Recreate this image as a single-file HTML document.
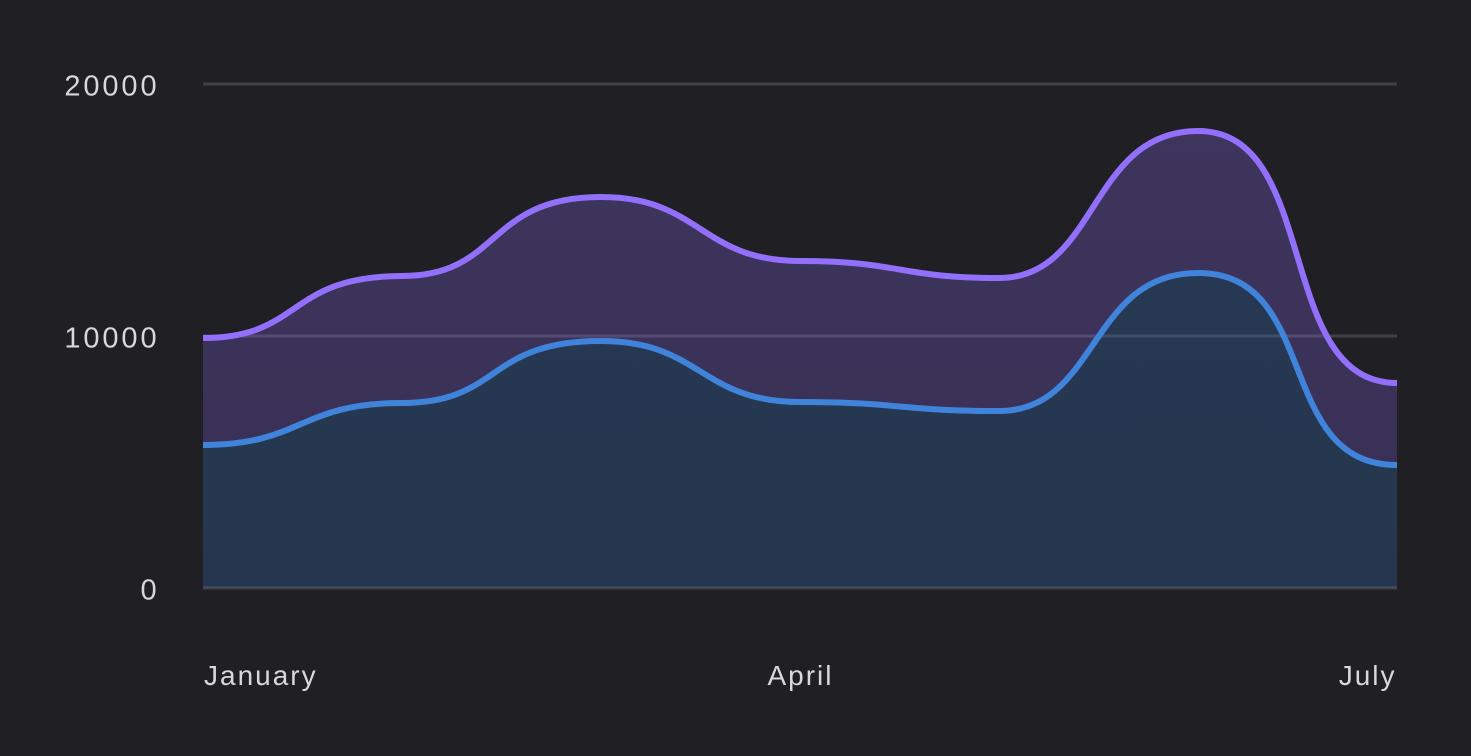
<!DOCTYPE html>
<html>
<head>
<meta charset="utf-8">
<style>
html,body{margin:0;padding:0;background:#1f1f24;width:1471px;height:756px;overflow:hidden}
svg{display:block}
text{font-family:"Liberation Sans",sans-serif;font-size:28px;fill:#d8d8db;letter-spacing:2px}
text.n{font-size:29px;letter-spacing:2.9px}
</style>
</head>
<body>
<svg width="1471" height="756" viewBox="0 0 1471 756" xmlns="http://www.w3.org/2000/svg">
<defs>
<clipPath id="c"><rect x="203" y="0" width="1194" height="756"/></clipPath>
<linearGradient id="pf" x1="0" y1="131" x2="0" y2="465" gradientUnits="userSpaceOnUse">
<stop offset="0" stop-color="#9070f8" stop-opacity=".27"/>
<stop offset="1" stop-color="#9068f8" stop-opacity=".24"/>
</linearGradient>
<linearGradient id="bf" x1="0" y1="273" x2="0" y2="588" gradientUnits="userSpaceOnUse">
<stop offset="0" stop-color="#3d80d6" stop-opacity=".26"/>
<stop offset="1" stop-color="#3d80d6" stop-opacity=".24"/>
</linearGradient>
</defs>
<rect width="1471" height="756" fill="#1f1f24"/>
<g fill="#404046">
<rect x="203" y="82.5" width="1194" height="3"/>
<rect x="203" y="334.5" width="1194" height="3"/>
<rect x="203" y="586.5" width="1194" height="3"/>
</g>
<path fill="url(#pf)" d="M203 338C302.5 338 286.6 276 402 276C501.5 276 485.6 197 601 197C700.5 197 700.5 261 800 261C899.5 261 899.5 278 999 278C1098.5 278 1088.6 131 1198 131C1321.4 131 1273.6 383 1397 383L1397 465C1273.6 465 1321.4 273 1198 273C1088.6 273 1098.5 411 999 411C899.5 411 899.5 402 800 402C700.5 402 700.5 341 601 341C485.6 341 501.5 403 402 403C298.5 403 302.5 445 203 445Z"/>
<path fill="url(#bf)" d="M203 445C302.5 445 298.5 403 402 403C501.5 403 485.6 341 601 341C700.5 341 700.5 402 800 402C899.5 402 899.5 411 999 411C1098.5 411 1088.6 273 1198 273C1321.4 273 1273.6 465 1397 465L1397 588L203 588Z"/>
<g clip-path="url(#c)" fill="none" stroke-width="6">
<path stroke="#9370fb" d="M203 338C302.5 338 286.6 276 402 276C501.5 276 485.6 197 601 197C700.5 197 700.5 261 800 261C899.5 261 899.5 278 999 278C1098.5 278 1088.6 131 1198 131C1321.4 131 1273.6 383 1397 383"/>
<path stroke="#3f84da" d="M203 445C302.5 445 298.5 403 402 403C501.5 403 485.6 341 601 341C700.5 341 700.5 402 800 402C899.5 402 899.5 411 999 411C1098.5 411 1088.6 273 1198 273C1321.4 273 1273.6 465 1397 465"/>
</g>
<text class="n" x="159.5" y="95.5" text-anchor="end">20000</text>
<text class="n" x="159.5" y="347.5" text-anchor="end">10000</text>
<text class="n" x="159.5" y="599.5" text-anchor="end">0</text>
<text x="204" y="685">January</text>
<text x="800.5" y="685" text-anchor="middle">April</text>
<text x="1396.5" y="685" text-anchor="end">July</text>
</svg>
</body>
</html>
